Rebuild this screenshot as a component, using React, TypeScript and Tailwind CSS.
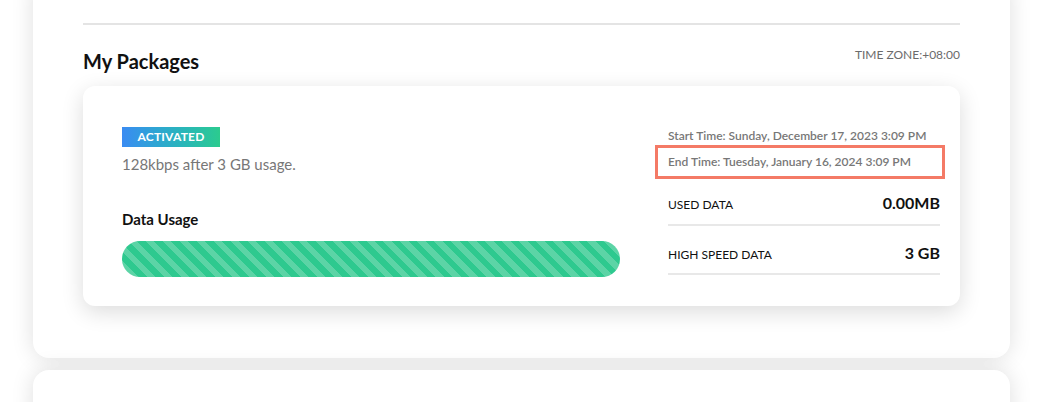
import React from "react";

export default function App() {
  const font = { fontFamily: "Lato, 'Noto Sans', sans-serif" };
  return (
    <div className="w-[1040px] h-[402px] overflow-hidden bg-white" style={font}>
      <div className="pl-[33px] pr-[30px] flex flex-col gap-[12px]">
        <div className="-mt-[20px] bg-white rounded-2xl shadow-[0_0_22px_rgba(0,0,0,0.13)] px-[50px] pt-[43px] pb-[52px]">
          <div className="h-[2px] bg-[#e4e4e4]" />
          <div className="flex items-end justify-between mt-[22px]">
            <h2 className="text-[20px] font-bold text-[#111] leading-[24px]">My Packages</h2>
            <span className="text-[12px] text-[#6b6b6b] leading-[16px] mb-[10px]">TIME ZONE:+08:00</span>
          </div>
          <div className="mt-[13px] bg-white rounded-xl shadow-[0_6px_22px_rgba(0,0,0,0.14)] pl-[39px] pr-[15px] pt-[41px] pb-[29px] flex justify-between">
            <div className="w-[498px] flex flex-col">
              <div className="w-[98px] h-[20px] bg-gradient-to-r from-[#3a8bf2] to-[#2ccb8e] flex items-center justify-center">
                <span className="text-white text-[12px] font-bold tracking-[0.2px] leading-none">ACTIVATED</span>
              </div>
              <p className="mt-[7px] text-[15px] text-[#777] leading-[20px]">128kbps after 3 GB usage.</p>
              <p className="mt-[35px] text-[15px] font-bold text-[#111] leading-[20px]">Data Usage</p>
              <div
                className="mt-[12px] h-[36px] rounded-full"
                style={{
                  backgroundColor: "#2ec98f",
                  backgroundImage:
                    "repeating-linear-gradient(45deg, #2ec98f 0px, #2ec98f 6px, #5cd4a6 6px, #5cd4a6 12px)",
                }}
              />
            </div>
            <div className="w-[290px] flex flex-col">
              <div className="pl-[13px] pr-[5px]">
                <p className="text-[12px] font-semibold text-[#777] leading-[18px]">
                  Start Time: Sunday, December 17, 2023 3:09 PM
                </p>
              </div>
              <div className="border-[3px] border-[#f47a66] pl-[10px] h-[34px] flex items-center">
                <p className="text-[12px] font-semibold text-[#777] leading-[18px]">
                  End Time: Tuesday, January 16, 2024 3:09 PM
                </p>
              </div>
              <div className="pl-[13px] pr-[5px]">
                <div className="flex items-end justify-between h-[47px] pb-[11px] border-b-2 border-[#e8e8e8]">
                  <span className="text-[12px] text-[#111] leading-[16px]">USED DATA</span>
                  <span className="text-[16px] font-bold text-[#111] leading-[20px]">0.00MB</span>
                </div>
                <div className="flex items-end justify-between h-[49px] pb-[10px] border-b-2 border-[#e8e8e8]">
                  <span className="text-[12px] text-[#111] leading-[16px]">HIGH SPEED DATA</span>
                  <span className="text-[16px] font-bold text-[#111] leading-[20px]">3 GB</span>
                </div>
              </div>
            </div>
          </div>
        </div>
        <div className="bg-white rounded-2xl shadow-[0_0_22px_rgba(0,0,0,0.13)] h-[200px]" />
      </div>
    </div>
  );
}
